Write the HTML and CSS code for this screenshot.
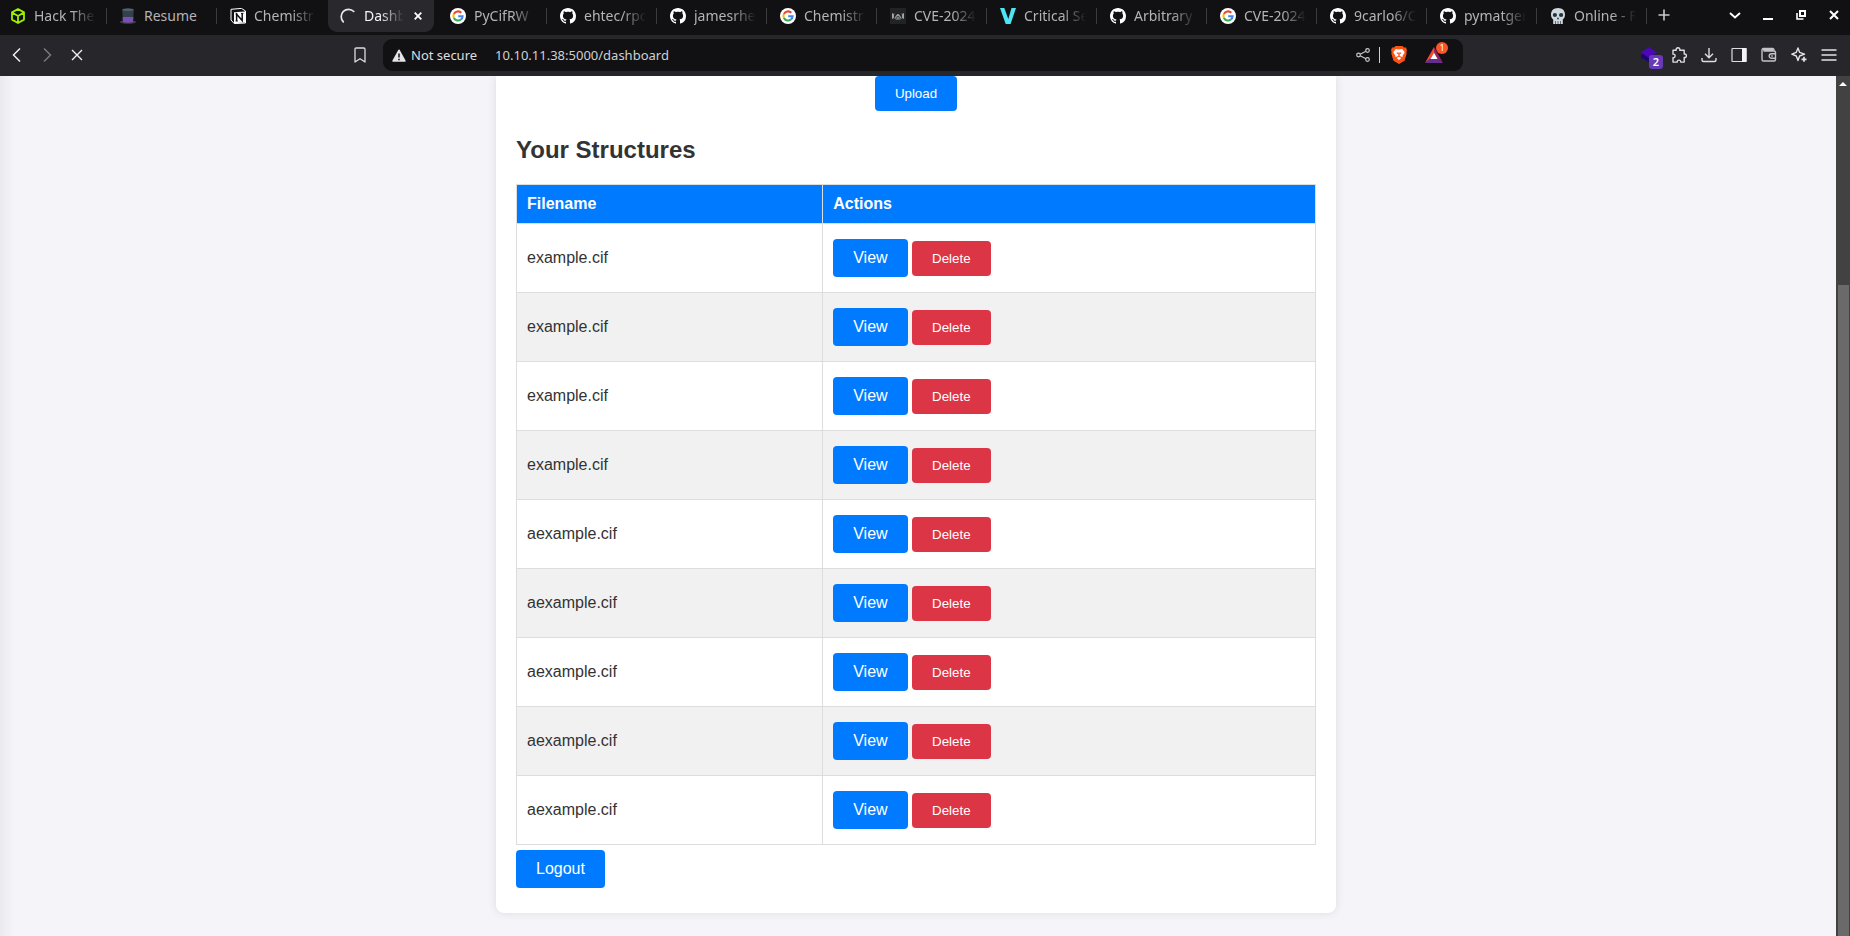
FILE: index.html
```html
<!DOCTYPE html>
<html lang="en">
<head>
<meta charset="utf-8">
<title>Dashboard</title>
<link rel="stylesheet" href="styles.css">
</head>
<body>
<svg class="sprite" aria-hidden="true">
  <symbol id="google" viewBox="0 0 16 16">
    <circle cx="8" cy="8" r="8" fill="#fff"/>
    <g fill="none" stroke-width="2.1">
      <path d="M11.3 4.8A4.6 4.6 0 0 0 3.9 5.9" stroke="#ea4335"/>
      <path d="M3.9 5.9A4.6 4.6 0 0 0 3.9 10.1" stroke="#fbbc05"/>
      <path d="M3.9 10.1A4.6 4.6 0 0 0 10.9 11.5" stroke="#34a853"/>
      <path d="M10.9 11.5A4.6 4.6 0 0 0 12.6 8.2H8.2" stroke="#4285f4"/>
    </g>
  </symbol>
  <symbol id="github" viewBox="0 0 16 16">
    <path fill="#fff" d="M8 0C3.58 0 0 3.58 0 8c0 3.54 2.29 6.53 5.47 7.59.4.07.55-.17.55-.38 0-.19-.01-.82-.01-1.49-2.01.37-2.53-.49-2.69-.94-.09-.23-.48-.94-.82-1.13-.28-.15-.68-.52-.01-.53.63-.01 1.08.58 1.23.82.72 1.21 1.87.87 2.33.66.07-.52.28-.87.51-1.07-1.78-.2-3.64-.89-3.64-3.95 0-.87.31-1.59.82-2.15-.08-.2-.36-1.02.08-2.12 0 0 .67-.21 2.2.82.64-.18 1.32-.27 2-.27s1.36.09 2 .27c1.53-1.04 2.2-.82 2.2-.82.44 1.1.16 1.92.08 2.12.51.56.82 1.27.82 2.15 0 3.07-1.87 3.75-3.65 3.95.29.25.54.73.54 1.48 0 1.07-.01 1.93-.01 2.2 0 .21.15.46.55.38A8.01 8.01 0 0 0 16 8c0-4.42-3.58-8-8-8z"/>
  </symbol>
</svg>

<header class="browser">
  <nav class="tabs" aria-label="Tabs">
    <div class="tab"><svg class="fav" viewBox="0 0 16 16" fill="none" stroke="#9fef00" stroke-width="1.8" stroke-linejoin="round"><path d="M8 1l6 3.4v7.2L8 15l-6-3.4V4.4zM2.5 4.8L8 8l5.500-3.200M8 8v6.500"/></svg><span class="tab-title">Hack The</span></div>
    <div class="tab"><svg class="fav" viewBox="0 0 16 16"><ellipse cx="8" cy="14" rx="8" ry="1.700" fill="#3b4450"/><path d="M2.200 1.500h11.600L13 14H3z" fill="#34404a"/><path d="M2.600 9h10.800L13 14q-5 1.500-10 0z" fill="#7a4fb5"/><ellipse cx="8" cy="1.700" rx="5.800" ry="1.400" fill="#50606c"/></svg><span class="tab-title tab-title-full">Resume</span></div>
    <div class="tab"><svg class="fav" viewBox="0 0 16 16"><path d="M1 1.300L11.500.4 15.500 3v12L4.200 15.600 1 12z" fill="#111" stroke="#fff" stroke-linejoin="round"/><path d="M4 4.300l11-.8v11l-11 .8z" fill="#fff"/><path d="M6.600 13V6.200l5.600 6.400V5.400" fill="none" stroke="#111" stroke-width="1.500"/><path d="M5.600 6h2M11 5.400h2.400M5.600 13h2.200" stroke="#111"/></svg><span class="tab-title">Chemistr</span></div>
    <div class="tab tab-active"><svg class="fav" viewBox="0 0 16 16" fill="none" stroke="#e8e8ea" stroke-width="1.700" stroke-linecap="round"><path d="M3.300 13.800A7 7 0 0 1 13.800 3.500"/></svg><span class="tab-title">Dashb</span><button class="tab-close" aria-label="Close tab"><svg width="8" height="8" viewBox="0 0 8 8" stroke="#fff" stroke-width="1.800"><path d="M.7.7l6.600 6.600M7.300.7L.7 7.300"/></svg></button></div>
    <div class="tab"><svg class="fav"><use href="#google"/></svg><span class="tab-title">PyCifRW</span></div>
    <div class="tab"><svg class="fav"><use href="#github"/></svg><span class="tab-title">ehtec/rpc</span></div>
    <div class="tab"><svg class="fav"><use href="#github"/></svg><span class="tab-title">jamesrhe</span></div>
    <div class="tab"><svg class="fav"><use href="#google"/></svg><span class="tab-title">Chemistr</span></div>
    <div class="tab"><svg class="fav" viewBox="0 0 16 16"><path fill="#222325" d="M0 0h16v16H0z"/><g fill="none" stroke="#a9afb0" stroke-width=".9"><path d="M2.500 5.500l1.500 5M4 5.500l-1.500 5M2.500 5.500v5M13.500 5.500l-1.500 5M12 5.500l1.500 5M13.500 5.500v5M5 10.500Q8 2 11 10.500M5.500 11h5"/><circle cx="8" cy="8.700" r="1.300"/></g></svg><span class="tab-title">CVE-2024</span></div>
    <div class="tab"><svg class="fav" viewBox="0 0 16 16"><path fill="#4de4f4" d="M0 0h4.300l4 11L11.500 0H16l-5.400 16H5.700z"/></svg><span class="tab-title">Critical Se</span></div>
    <div class="tab"><svg class="fav"><use href="#github"/></svg><span class="tab-title">Arbitrary</span></div>
    <div class="tab"><svg class="fav"><use href="#google"/></svg><span class="tab-title">CVE-2024</span></div>
    <div class="tab"><svg class="fav"><use href="#github"/></svg><span class="tab-title">9carlo6/C</span></div>
    <div class="tab"><svg class="fav"><use href="#github"/></svg><span class="tab-title">pymatgen</span></div>
    <div class="tab"><svg class="fav" viewBox="0 0 16 16"><path fill="#cfd8df" d="M8 0c4.500 0 7 2.800 7 6.600 0 2.200-.7 4-2.200 5V16H3.200v-4.400C1.700 10.600 1 8.800 1 6.600 1 2.800 3.500 0 8 0z"/><g fill="#26323a"><circle cx="4.900" cy="7" r="2.100"/><circle cx="11.100" cy="7" r="2.100"/><path d="M8 9l1.200 2.200H6.800z"/></g><path d="M5.500 13v3M8 13v3M10.500 13v3" stroke="#53616b" stroke-width=".9"/></svg><span class="tab-title">Online - F</span></div>
    <button class="new-tab" aria-label="New tab"><svg width="12" height="12" viewBox="0 0 12 12" stroke="#c9c9cc" stroke-width="1.600"><path d="M6 .5v11M.5 6h11"/></svg></button>
    <div class="window-buttons">
      <button aria-label="Search tabs"><svg width="12" height="12" viewBox="0 0 12 12" fill="none" stroke="#fff" stroke-width="1.900"><path d="M1 4l5 4.500L11 4"/></svg></button>
      <button aria-label="Minimize"><svg width="10" height="12" viewBox="0 0 10 12"><path fill="#fff" d="M0 9h10v2H0z"/></svg></button>
      <button aria-label="Restore"><svg width="10" height="10" viewBox="0 0 10 10" fill="none" stroke="#fff" stroke-width="2"><path d="M4 1h5v5H4z"/><path d="M1 3v6h6.500" stroke-width="1.600"/></svg></button>
      <button aria-label="Close"><svg width="10" height="10" viewBox="0 0 10 10" stroke="#fff" stroke-width="2"><path d="M1 1l8 8M9 1L1 9"/></svg></button>
    </div>
  </nav>
  <div class="toolbar">
    <div class="nav-buttons">
      <button aria-label="Back"><svg width="16" height="16" viewBox="0 0 16 16" fill="none" stroke="#f0f0f2" stroke-width="1.500"><path d="M11 1.500L4.500 8l6.500 6.500"/></svg></button>
      <button aria-label="Forward"><svg width="16" height="16" viewBox="0 0 16 16" fill="none" stroke="#78787d" stroke-width="1.500"><path d="M5 1.500L11.500 8 5 14.500"/></svg></button>
      <button aria-label="Stop"><svg width="16" height="16" viewBox="0 0 16 16" stroke="#f0f0f2" stroke-width="1.400"><path d="M3 3l10 10M13 3L3 13"/></svg></button>
      <button class="bookmark" aria-label="Bookmark"><svg width="16" height="16" viewBox="0 0 16 16" fill="none" stroke="#dcdce0" stroke-width="1.300" stroke-linejoin="round"><path d="M3 2.200Q3 1 4.200 1h7.600Q13 1 13 2.200V15l-5-3.300L3 15z"/></svg></button>
    </div>
    <div class="address">
      <svg width="14" height="13" viewBox="0 0 14 13"><path d="M7 1.300L12.800 12H1.200z" fill="#e4e4e7" stroke="#e4e4e7" stroke-width="1.700" stroke-linejoin="round"/><path d="M7 4.500v4M7 9.700v1.500" stroke="#111" stroke-width="1.500"/></svg>
      <span class="insecure">Not secure</span>
      <input class="url" type="text" value="10.10.11.38:5000/dashboard" aria-label="Address">
      <button class="share" aria-label="Share"><svg width="14" height="14" viewBox="0 0 14 14" fill="none" stroke="#c7c7cb" stroke-width="1.200"><circle cx="2.500" cy="7" r="1.800"/><circle cx="11.500" cy="2.500" r="1.800"/><circle cx="11.500" cy="11.500" r="1.800"/><path d="M4.100 6.200l5.800-2.900M4.100 7.800l5.800 2.900"/></svg></button>
      <span class="divider"></span>
      <button class="shield" aria-label="Shields"><svg width="16" height="18" viewBox="0 0 16 18"><path fill="#fb5215" d="M4.500 0h7l1.500 1.600 2-.1 1 2.700-.6 1.800.3 1.600-2.200 7.200L8 18l-5.500-3.200L.3 7.600.6 6 0 4.200l1-2.700 2 .1z"/><path fill="#fff" d="M8 3.600l3.200-.5L13.600 6l-.4 1.300-1.800 2.600.3 1.300L8.800 10 8.500 8.600 10.800 7 8.600 6.300 8 8l-.6-1.700L5.200 7l2.300 1.600L7.200 10l-2.900 1.200.3-1.300-1.800-2.600L2.400 6l2.400-2.900zM8 10.800l2.300 1.300L8 14l-2.300-1.900z"/></svg></button>
      <button class="rewards" aria-label="Rewards"><svg width="18" height="16" viewBox="0 0 18 16"><path fill="#ff4724" d="M9 0v5.500l-3.500 6L0 16z"/><path fill="#9e1f63" d="M9 0l9 16-5.500-4.500L9 5.500z"/><path fill="#662d91" d="M0 16l5-4.500h8l5 4.500z"/><path fill="#fff" d="M9 5.500l3.600 6.500H5.400z"/></svg><span class="reward-count">1</span></button>
    </div>
    <div class="extensions">
      <button class="ext" aria-label="Extension"><svg width="16" height="16" viewBox="0 0 16 16"><path fill="#1e0478" d="M0 8l3-2 13 2v2l-8 5-8-4.500z"/><path fill="#4c08b5" d="M8 0l8 5.500-8 5.500L0 5.500z"/></svg><span class="ext-count">2</span></button>
      <button aria-label="Extensions"><svg width="16" height="16" viewBox="0 0 16 16" fill="none" stroke="#dedee2" stroke-width="1.400" stroke-linejoin="round"><path d="M2 3.200h3.200C4.900 1.800 5.700.8 7 .8s2.100 1 1.800 2.400h4.400v3.900c1.300-.3 2.200.5 2.200 1.700s-.9 2-2.200 1.700v4.600H9.700c.1-1.300-.6-2-1.700-2s-1.900.7-1.800 2H2v-4.500c1.400.1 2.100-.7 2.100-1.800S3.400 7 2 7.200z"/></svg></button>
      <button aria-label="Downloads"><svg width="16" height="16" viewBox="0 0 16 16" fill="none" stroke="#dedee2" stroke-width="1.400"><path d="M8 1v9.500M4 6.800l4 3.900 4-3.900M1 11v2q0 1.500 1.500 1.500h11Q15 14.500 15 13v-2"/></svg></button>
      <button aria-label="Sidebar"><svg width="16" height="16" viewBox="0 0 16 16"><rect x="1" y="1.500" width="14" height="13" rx=".5" fill="none" stroke="#dedee2" stroke-width="1.200"/><path fill="#f4f4f6" d="M11 1h4.500v14H11z"/></svg></button>
      <button aria-label="Wallet"><svg width="16" height="16" viewBox="0 0 16 16" fill="none" stroke="#c4c4c8" stroke-width="1.400"><path d="M13 4V3q0-1.500-1.500-1.500h-9Q1 1.500 1 3v9.500Q1 14 2.500 14H13q1.500 0 1.500-1.500V5.500Q14.500 4 13 4H2.500M2 2.700h10"/><path d="M15 6.700h-4.500a2.300 2.300 0 0 0 0 4.600H15M10.300 9h1.500"/></svg></button>
      <button aria-label="Assistant"><svg width="16" height="16" viewBox="0 0 16 16" fill="none" stroke="#e4e4e7" stroke-width="1.400" stroke-linejoin="round"><path d="M7 1l1.600 4.300L13.500 7.200 8.600 9 7 13.500 5.300 9 .8 7.200l4.500-1.900z"/><path d="M13 9.800v5M10.500 12.300h5" stroke-width="1.700"/></svg></button>
      <button aria-label="Menu"><svg width="16" height="16" viewBox="0 0 16 16" stroke="#e4e4e7" stroke-width="1.400"><path d="M.5 3h15M.5 8h15M.5 13h15"/></svg></button>
    </div>
  </div>
</header>

<div class="viewport">
  <main class="page">
    <div class="container">
      <form class="upload"><button class="btn" type="button">Upload</button></form>
      <h2>Your Structures</h2>
      <table>
        <thead><tr><th>Filename</th><th>Actions</th></tr></thead>
        <tbody>
          <tr><td>example.cif</td><td><a class="btn" href="#">View</a> <button class="btn btn-delete">Delete</button></td></tr>
          <tr><td>example.cif</td><td><a class="btn" href="#">View</a> <button class="btn btn-delete">Delete</button></td></tr>
          <tr><td>example.cif</td><td><a class="btn" href="#">View</a> <button class="btn btn-delete">Delete</button></td></tr>
          <tr><td>example.cif</td><td><a class="btn" href="#">View</a> <button class="btn btn-delete">Delete</button></td></tr>
          <tr><td>aexample.cif</td><td><a class="btn" href="#">View</a> <button class="btn btn-delete">Delete</button></td></tr>
          <tr><td>aexample.cif</td><td><a class="btn" href="#">View</a> <button class="btn btn-delete">Delete</button></td></tr>
          <tr><td>aexample.cif</td><td><a class="btn" href="#">View</a> <button class="btn btn-delete">Delete</button></td></tr>
          <tr><td>aexample.cif</td><td><a class="btn" href="#">View</a> <button class="btn btn-delete">Delete</button></td></tr>
          <tr><td>aexample.cif</td><td><a class="btn" href="#">View</a> <button class="btn btn-delete">Delete</button></td></tr>
        </tbody>
      </table>
      <a class="btn" href="#">Logout</a>
    </div>
  </main>
  <div class="scrollbar"><svg width="8" height="4" viewBox="0 0 8 4"><path fill="#fff" d="M4 0l4 4H0z"/></svg><div class="thumb"></div></div>
</div>
</body>
</html>
```
FILE: styles.css
```css
* { box-sizing: border-box; }

body {
  margin: 0;
  height: 100vh;
  display: flex;
  flex-direction: column;
  overflow: hidden;
  background: #f4f4f9;
  color: #333;
  font-family: "Liberation Sans", Arial, sans-serif;
  font-size: 16px;
}

.sprite { display: none; }

/* Browser chrome */
.browser {
  flex: none;
  background: #26262b;
  color: #b4b4b8;
  font: 13px/18px "Noto Sans", sans-serif;
}

.browser button {
  display: flex;
  align-items: center;
  justify-content: center;
  padding: 0;
  border: 0;
  background: none;
  color: inherit;
  font: inherit;
}

.tabs {
  display: flex;
  height: 35px;
  background: #111113;
}

.tab {
  position: relative;
  display: flex;
  align-items: center;
  flex: 0 1 110px;
  min-width: 0;
  height: 32px;
  padding: 0 12px 0 10px;
  gap: 8px;
}

.tab::after {
  content: "";
  position: absolute;
  right: 3px;
  top: 8px;
  width: 1px;
  height: 16px;
  background: #3b3b3f;
}

.tab:has(+ .tab-active)::after,
.tab-active::after { display: none; }

.tab-active {
  flex-basis: 106px;
  margin: 0 6px 0 -2px;
  padding: 0 12px;
  border-radius: 0 0 9px 9px;
  background: #28282d;
  color: #f4f4f6;
}

.fav { flex: none; width: 16px; height: 16px; }

.tab-title {
  flex: 1;
  min-width: 0;
  overflow: hidden;
  white-space: nowrap;
  font-size: 14px;
  -webkit-mask-image: linear-gradient(to right, #000 calc(100% - 26px), transparent calc(100% - 2px));
  mask-image: linear-gradient(to right, #000 calc(100% - 26px), transparent calc(100% - 2px));
}

.tab-title-full { -webkit-mask-image: none; mask-image: none; }

.new-tab { width: 28px; height: 30px; }

.window-buttons { display: flex; height: 30px; margin-left: auto; }
.window-buttons button { width: 33px; }

.toolbar {
  display: flex;
  align-items: center;
  height: 41px;
  padding-bottom: 1px;
}

.nav-buttons { display: flex; flex: 0 0 383px; padding: 0 8px 0 2px; }
.nav-buttons button { width: 30px; height: 30px; }
.nav-buttons .bookmark { margin-left: auto; }

.address {
  display: flex;
  align-items: center;
  flex: 1;
  height: 32px;
  padding: 0 20px 0 9px;
  border-radius: 9px;
  background: #111113;
}

.insecure { margin: 0 18px 0 5px; color: #dedee1; }

.url {
  flex: 1;
  min-width: 0;
  padding: 0;
  border: 0;
  outline: 0;
  background: none;
  color: #d0d0d3;
  font: inherit;
}

.divider { width: 1px; height: 16px; margin: 0 11px 0 9px; background: #d0d0d4; }

.rewards { position: relative; margin-left: 18px; }

.reward-count {
  position: absolute;
  top: -5px;
  right: -5px;
  width: 12px;
  border-radius: 6px;
  background: #fb542b;
  color: #fff;
  font-size: 9px;
  line-height: 12px;
}

.extensions { display: flex; flex: 0 0 387px; justify-content: flex-end; padding-right: 6px; }
.extensions button { width: 30px; height: 30px; }
.extensions .ext { position: relative; }

.ext-count {
  position: absolute;
  top: 15px;
  right: 1px;
  width: 14px;
  border-radius: 3px;
  background: #673ab7;
  color: #fff;
  font-size: 11px;
  font-weight: 600;
  line-height: 14px;
}

/* Page */
.viewport { display: flex; flex: 1; min-height: 0; }

.page {
  flex: 1;
  overflow: hidden;
  padding-right: 4px;
  background: linear-gradient(to right, #e9e9ee, #f4f4f9 14px);
}

.container {
  max-width: 840px;
  margin: 0 auto;
  padding: 0 20px 20px;
  border-radius: 0 0 8px 8px;
  background: #fff;
  box-shadow: 0 0 10px rgba(0, 0, 0, 0.1);
}

.upload { display: flex; justify-content: center; }
.upload .btn { margin: 0; }

h2 { margin: 25px 0 20px; font-size: 24px; line-height: 28px; }

table { width: 100%; border-collapse: collapse; }
th, td { padding: 10px; border: 1px solid #ddd; text-align: left; }
th { background: #007bff; color: #fff; }
tbody tr:nth-child(even) { background: #f1f1f1; }

.btn {
  display: inline-block;
  margin: 5px 0;
  padding: 10px 20px;
  border: 0;
  border-radius: 4px;
  background: #007bff;
  color: #fff;
  text-decoration: none;
}

button.btn { font-family: inherit; }
.btn-delete { background: #dc3545; }

.scrollbar {
  display: flex;
  flex-direction: column;
  align-items: center;
  flex: 0 0 14px;
  padding-top: 6px;
  background: #424242;
}

.thumb { flex: 1; width: 11px; margin-top: 199px; background: #6a6a6a; }
```
